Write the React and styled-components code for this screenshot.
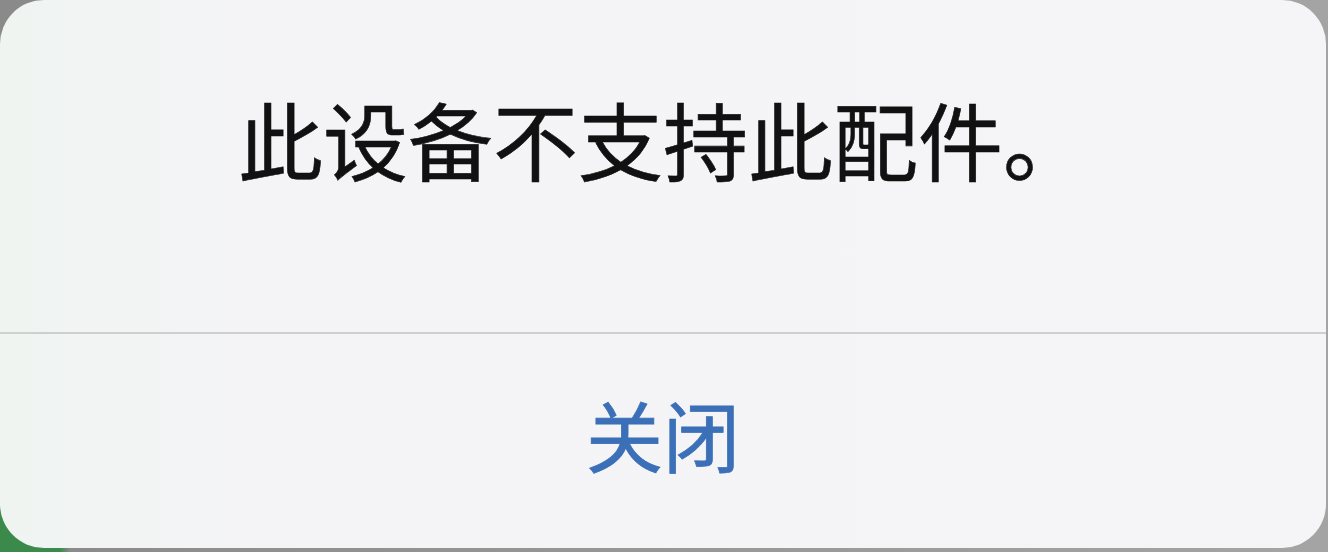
import React from 'react';
import styled, { createGlobalStyle } from 'styled-components';

const GlobalStyle = createGlobalStyle`
  html, body {
    margin: 0;
    padding: 0;
    width: 1328px;
    height: 552px;
    overflow: hidden;
    background:
      radial-gradient(circle at 0 100%, #3b8a4c 0, #3b8a4c 60px, transparent 70px),
      linear-gradient(90deg, #8a8a8a 0%, #a4a4a4 100%);
    font-family: "Noto Sans CJK SC", "Noto Sans", sans-serif;
  }
`;

const Alert = styled.div`
  width: 1326px;
  height: 548px;
  border-radius: 44px;
  overflow: hidden;
  display: flex;
  flex-direction: column;
  background: linear-gradient(90deg, #eff4f1 0%, #f4f4f6 18%, #f5f4f7 100%);
`;

const Message = styled.div`
  height: 332px;
  display: flex;
  justify-content: center;
  padding-top: 88px;
  box-sizing: border-box;
  font-size: 85px;
  line-height: 100px;
  font-weight: 400;
  color: #111;
  -webkit-text-stroke: 0.6px #111;
`;

const Divider = styled.div`
  height: 2px;
  background: #cfcfd2;
`;

const ActionButton = styled.button`
  flex: 1;
  border: none;
  background: transparent;
  font-family: inherit;
  font-size: 77px;
  font-weight: 400;
  color: ${props => props.$color || '#3b70b8'};
  -webkit-text-stroke: 0.8px currentColor;
  display: flex;
  align-items: center;
  justify-content: center;
  padding: 0 0 16px;
  cursor: pointer;
`;

const App = () => (
  <>
    <GlobalStyle />
    <Alert>
      <Message>此设备不支持此配件。</Message>
      <Divider />
      <ActionButton>关闭</ActionButton>
    </Alert>
  </>
);

export default App;
